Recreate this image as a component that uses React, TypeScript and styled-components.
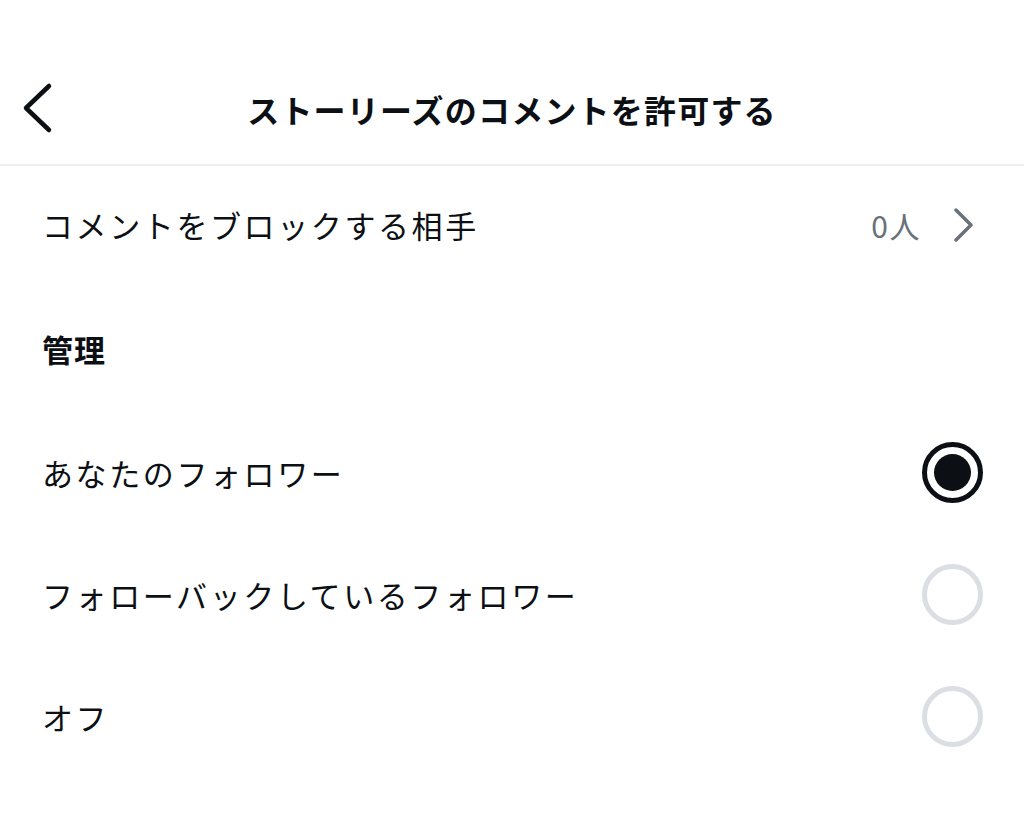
import React, { useState } from "react";
import styled, { createGlobalStyle } from "styled-components";

const GlobalStyle = createGlobalStyle`
  html, body {
    margin: 0;
    padding: 0;
    background: #ffffff;
  }
  body {
    font-family: "Noto Sans CJK JP", "Noto Sans", sans-serif;
    color: #0c1014;
  }
`;

const Page = styled.div`
  width: 1024px;
  min-height: 833px;
  background: #ffffff;
  display: flex;
  flex-direction: column;
`;

const Header = styled.header`
  position: relative;
  height: 104px;
  padding-top: 60px;
  border-bottom: 2px solid #efefef;
  display: flex;
  align-items: center;
  justify-content: center;
`;

const BackButton = styled.button`
  position: absolute;
  left: 18px;
  top: 79px;
  width: 40px;
  height: 58px;
  border: none;
  background: none;
  padding: 0;
  display: flex;
  align-items: center;
  justify-content: center;
  cursor: pointer;
`;

const Title = styled.h1`
  margin: 0 0 6px;
  font-size: 32px;
  font-weight: 700;
  letter-spacing: 1.2px;
  color: #0c1014;
`;

const List = styled.div`
  display: flex;
  flex-direction: column;
`;

const Row = styled.div<{ $padRight?: number }>`
  height: 122px;
  padding: 0 ${(p) => p.$padRight ?? 41}px 0 42px;
  display: flex;
  align-items: center;
  justify-content: space-between;
`;

const RowLabel = styled.span<{ $lift?: number }>`
  font-size: 31px;
  font-weight: 400;
  letter-spacing: 2.6px;
  color: #0c1014;
  margin-bottom: ${(p) => p.$lift ?? 0}px;
`;

const Trailing = styled.div`
  display: flex;
  align-items: center;
  gap: 32px;
  margin-bottom: 4px;
`;

const Count = styled.span`
  font-size: 30px;
  letter-spacing: 1.5px;
  color: #6b7178;
`;

const SectionTitle = styled.div`
  height: 123px;
  padding: 0 42px 2px;
  box-sizing: border-box;
  display: flex;
  align-items: center;
  font-size: 31px;
  font-weight: 700;
  letter-spacing: 1px;
  color: #0c1014;
`;

const Radio = styled.span<{ $checked: boolean }>`
  width: 61px;
  height: 61px;
  box-sizing: border-box;
  border-radius: 50%;
  border: 5px solid ${(p) => (p.$checked ? "#0c1014" : "#dbdfe4")};
  display: flex;
  align-items: center;
  justify-content: center;
  flex-shrink: 0;

  &::after {
    content: "";
    width: 37px;
    height: 37px;
    border-radius: 50%;
    background: ${(p) => (p.$checked ? "#0c1014" : "transparent")};
  }
`;

const options = [
  "あなたのフォロワー",
  "フォローバックしているフォロワー",
  "オフ",
];

export default function App() {
  const [selected, setSelected] = useState(0);
  return (
    <Page>
      <GlobalStyle />
      <Header>
        <BackButton aria-label="戻る">
          <svg width="40" height="58" viewBox="0 0 40 58" fill="none">
            <path
              d="M31 7 L8 29 L31 51"
              stroke="#0c1014"
              strokeWidth="4.5"
              strokeLinecap="round"
              strokeLinejoin="round"
            />
          </svg>
        </BackButton>
        <Title>ストーリーズのコメントを許可する</Title>
      </Header>
      <List>
        <Row $padRight={49}>
          <RowLabel $lift={5}>コメントをブロックする相手</RowLabel>
          <Trailing>
            <Count>0人</Count>
            <svg width="22" height="34" viewBox="0 0 22 34" fill="none">
              <path
                d="M3 2 L18 17 L3 32"
                stroke="#6b7178"
                strokeWidth="3.5"
                strokeLinecap="round"
                strokeLinejoin="round"
              />
            </svg>
          </Trailing>
        </Row>
        <SectionTitle>管理</SectionTitle>
        {options.map((label, i) => (
          <Row key={label} onClick={() => setSelected(i)}>
            <RowLabel>{label}</RowLabel>
            <Radio $checked={selected === i} />
          </Row>
        ))}
      </List>
    </Page>
  );
}
